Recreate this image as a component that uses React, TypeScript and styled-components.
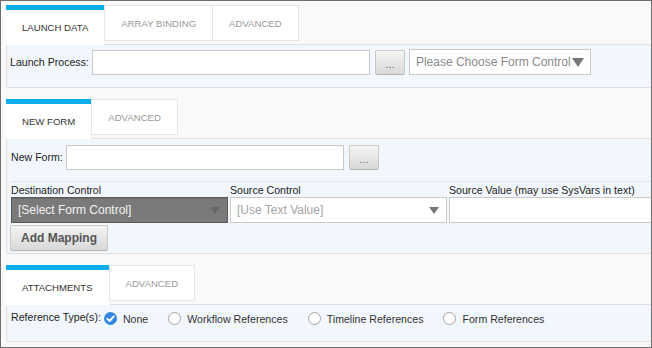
import React from 'react'
import styled, { createGlobalStyle, css } from 'styled-components'

const GlobalStyle = createGlobalStyle`
  body {
    margin: 0;
    font-family: "Liberation Sans", Arial, sans-serif;
    background: #ffffff;
  }
`

const Frame = styled.div`
  width: 652px;
  height: 348px;
  box-sizing: border-box;
  border: 1px solid #6f6f6f;
  background: #f9f9f9;
  overflow: hidden;
  padding: 4px 0 0 5px;
`

const Section = styled.div`
  & + & {
    margin-top: 11px;
  }
`

const TabBar = styled.div`
  display: flex;
  align-items: flex-start;
`

// first tab is always the active one, so later inactive tabs share a border
const Tab = styled.div<{ $active?: boolean }>`
  box-sizing: border-box;
  display: flex;
  align-items: center;
  padding: 0 16px;
  background: #ffffff;
  font-size: 9.6px;
  text-transform: uppercase;
  white-space: nowrap;
  ${(p) =>
    p.$active
      ? css`
          height: 40px;
          margin-bottom: -1px;
          padding-bottom: 1px;
          border-top: 5px solid #0aaeea;
          color: #333;
          position: relative;
          z-index: 1;
        `
      : css`
          height: 36px;
          border: 1px solid #e6e6e6;
          color: #999;
          &:nth-child(n + 3) {
            margin-left: -1px;
          }
        `}
`

const Panel = styled.div<{ $pad: string }>`
  background: #f2f7fd;
  border: 1px solid #e0e0e0;
  border-right: none;
  border-bottom-left-radius: 4px;
  padding: ${(p) => p.$pad};
`

const Row = styled.div<{ $h?: number }>`
  display: flex;
  align-items: center;
  height: ${(p) => p.$h ?? 26}px;
`

const Label = styled.span<{ $gap?: number }>`
  font-size: 10.6px;
  color: #222;
  white-space: nowrap;
  margin-right: ${(p) => p.$gap ?? 3}px;
`

const TextInput = styled.div<{ $w: number }>`
  box-sizing: border-box;
  width: ${(p) => p.$w}px;
  height: 25px;
  background: #ffffff;
  border: 1px solid #c9c9c9;
  flex-shrink: 0;
`

const DotsButton = styled.div`
  box-sizing: border-box;
  width: 30px;
  height: 25px;
  margin: 1px 4px 0 5px;
  display: flex;
  align-items: center;
  justify-content: center;
  padding-top: 3px;
  background: linear-gradient(#f4f4f4, #d9d9d9);
  border: 1px solid #cacaca;
  border-bottom-color: #b5b5b5;
  border-radius: 2px;
  font-size: 11px;
  color: #666;
`

const SelectBox = styled.div<{ $w?: number; $dark?: boolean }>`
  box-sizing: border-box;
  ${(p) => (p.$w ? `width: ${p.$w}px;` : '')}
  height: 26px;
  display: flex;
  align-items: center;
  justify-content: space-between;
  padding: 0 7px 0 6px;
  font-size: 12px;
  white-space: nowrap;
  ${(p) =>
    p.$dark
      ? css`
          background: #7a7a7a;
          border: 1px solid #5a5a5a;
          color: #f2f2f2;
          box-shadow: inset 0 1px 0 #6c6c6c;
        `
      : css`
          background: #ffffff;
          border: 1px solid #c9c9c9;
          color: #8a8a8a;
        `}
`

const Placeholder = styled.span`
  color: #a5a5a5;
`

const Caret = styled.span<{ $big?: boolean; $color: string }>`
  width: 0;
  height: 0;
  flex-shrink: 0;
  border-left: ${(p) => (p.$big ? 6 : 5)}px solid transparent;
  border-right: ${(p) => (p.$big ? 6 : 5)}px solid transparent;
  border-top: ${(p) => (p.$big ? 9 : 7)}px solid ${(p) => p.$color};
  margin-left: 1px;
`

const MappingGrid = styled.div`
  margin-top: 11px;
  border-top: 1px solid #e4e8ee;
  display: grid;
  grid-template-columns: 217px 217px 217px;
  grid-template-rows: 15px 26px;
  column-gap: 2px;
  align-items: center;
`

const ColLabel = styled.span`
  font-size: 10.6px;
  color: #222;
  white-space: nowrap;
`

const AddButton = styled.div`
  box-sizing: border-box;
  display: inline-flex;
  align-items: center;
  height: 26px;
  margin: 2px 0 0 -1px;
  padding: 0 10px;
  background: linear-gradient(#f3f3f3, #d9d9d9);
  border: 1px solid #c8c8c8;
  border-bottom-color: #b4b4b4;
  border-radius: 2px;
  font-size: 12px;
  font-weight: bold;
  color: #555;
`

const RadioItem = styled.label`
  display: flex;
  align-items: center;
  gap: 6px;
  margin-right: 20px;
  font-size: 10.6px;
  color: #333;
  padding-top: 3px;
`

function Radio({ checked }: { checked?: boolean }) {
  return checked ? (
    <svg width="13" height="13" viewBox="0 0 13 13">
      <circle cx="6.5" cy="6.5" r="6.5" fill="#3589dc" />
      <path d="M3.4 6.8 L5.6 9 L9.7 4.4" fill="none" stroke="#fff" strokeWidth="1.9" strokeLinecap="round" strokeLinejoin="round" />
    </svg>
  ) : (
    <svg width="13" height="13" viewBox="0 0 13 13">
      <circle cx="6.5" cy="6.5" r="6" fill="#fff" stroke="#a3a3a3" strokeWidth="1" />
    </svg>
  )
}

export default function App() {
  return (
    <>
      <GlobalStyle />
      <Frame>
        <Section>
          <TabBar>
            <Tab $active>Launch Data</Tab>
            <Tab>Array Binding</Tab>
            <Tab>Advanced</Tab>
          </TabBar>
          <Panel $pad="4px 0 12px 3px">
            <Row>
              <Label>Launch Process:</Label>
              <TextInput $w={278} />
              <DotsButton>...</DotsButton>
              <SelectBox $w={182}>
                <span>Please Choose Form Control</span>
                <Caret $big $color="#777" />
              </SelectBox>
            </Row>
          </Panel>
        </Section>

        <Section>
          <TabBar>
            <Tab $active>New Form</Tab>
            <Tab>Advanced</Tab>
          </TabBar>
          <Panel $pad="5px 0 2px 4px">
            <Row>
              <Label>New Form:</Label>
              <TextInput $w={278} />
              <DotsButton>...</DotsButton>
            </Row>
            <MappingGrid>
              <ColLabel>Destination Control</ColLabel>
              <ColLabel>Source Control</ColLabel>
              <ColLabel>Source Value (may use SysVars in text)</ColLabel>
              <SelectBox $dark>
                <span>[Select Form Control]</span>
                <Caret $color="#686868" />
              </SelectBox>
              <SelectBox>
                <Placeholder>[Use Text Value]</Placeholder>
                <Caret $color="#777" />
              </SelectBox>
              <SelectBox />
            </MappingGrid>
            <AddButton>Add Mapping</AddButton>
          </Panel>
        </Section>

        <Section>
          <TabBar>
            <Tab $active>Attachments</Tab>
            <Tab>Advanced</Tab>
          </TabBar>
          <Panel $pad="2px 0 14px 4px">
            <Row $h={20}>
              <Label>Reference Type(s):</Label>
              <RadioItem>
                <Radio checked />
                None
              </RadioItem>
              <RadioItem>
                <Radio />
                Workflow References
              </RadioItem>
              <RadioItem>
                <Radio />
                Timeline References
              </RadioItem>
              <RadioItem>
                <Radio />
                Form References
              </RadioItem>
            </Row>
          </Panel>
        </Section>
      </Frame>
    </>
  )
}
